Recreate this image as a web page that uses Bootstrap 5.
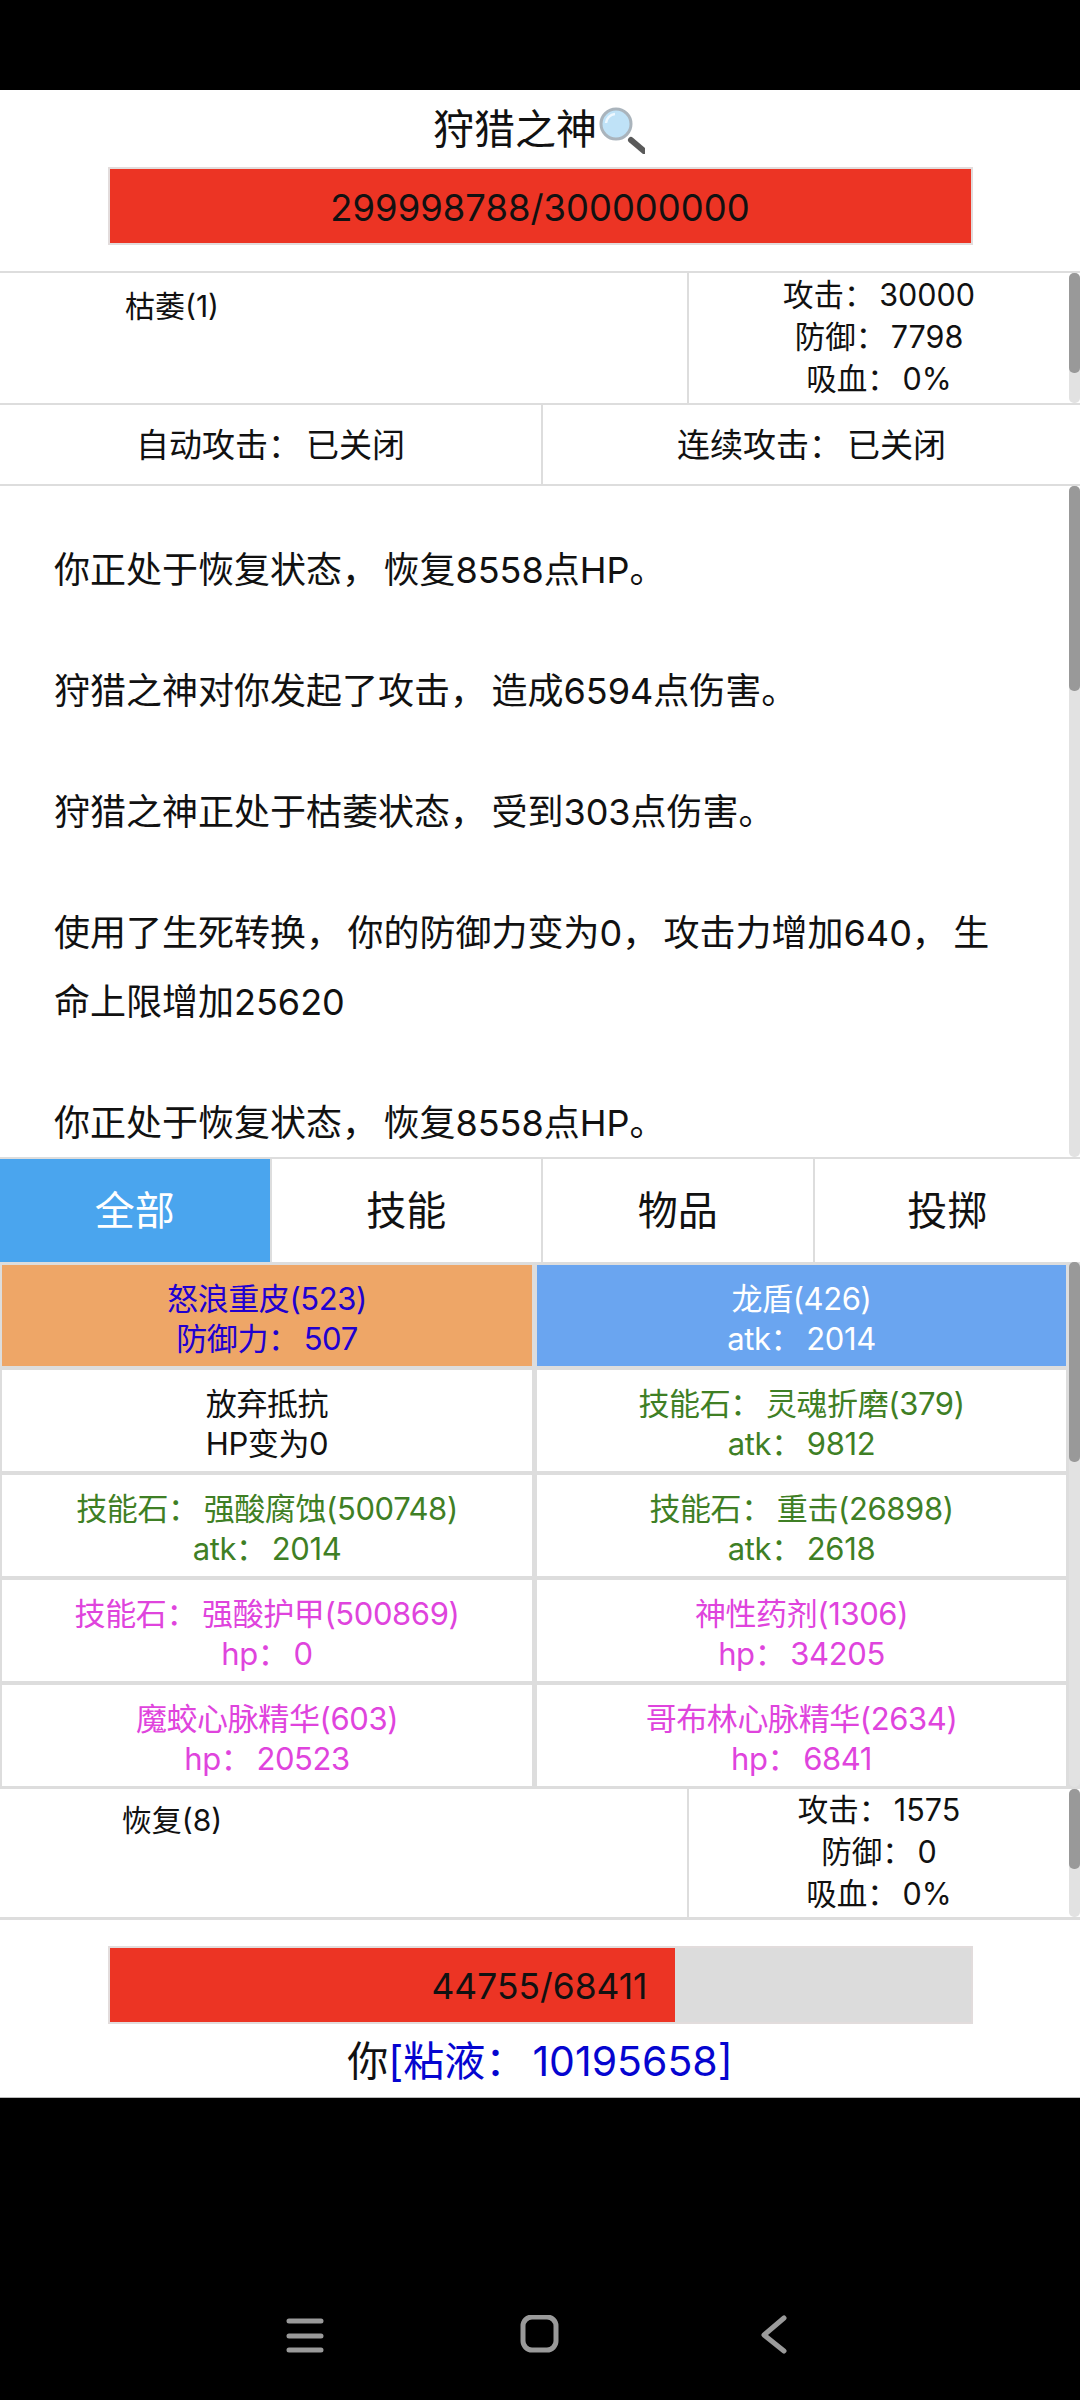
<!DOCTYPE html>
<html lang="zh-CN">
<head>
<meta charset="utf-8">
<title>狩猎之神</title>
<link href="https://cdn.jsdelivr.net/npm/bootstrap@5.3.0/dist/css/bootstrap.min.css" rel="stylesheet">
<style>
html,body{background:#000;width:1080px;height:2400px;overflow:hidden}
body{font-family:Inter,"Noto Sans CJK SC",sans-serif;color:#111;font-size:32px;line-height:42px}
.wp{letter-spacing:.15em}
.top-gap{height:90px}
.game{background:#fff;height:2008px;border-bottom:1px solid #bbb}
.head-zone{height:181px;padding-top:9px}
.boss-title{font-size:41px;line-height:60px;height:60px;padding-right:2px}
.boss-title svg{width:50px;height:50px;vertical-align:-10px;margin-left:-2px}
.hp-track{width:865px;height:78px;margin:8px auto 0;background:#dcdcdc;border:2px solid #e2dcdc;font-size:36.4px;line-height:78px}
.hp-fill{height:100%;background:#ec3424}
.boss-hp{text-align:center}
.me-hp{text-align:right;padding-right:27px;width:565px;font-size:35.4px}
.sect{border-top:2px solid #ddd;position:relative}
.status-zone{height:132px}
.status-zone.me{height:130px}
.buff-area{width:689px;border-right:2px solid #ddd}
.buff-box{width:344px;padding-top:12px;font-size:30px}
.me .buff-box{padding-top:10px}
.stat-area{width:380px;padding:1px 0 0 0;font-size:30.5px}
.me .stat-area{padding-top:0}
.toggle-zone{height:81px;font-size:33px;line-height:81px}
.toggle-zone .col-6:first-child{width:543px;border-right:2px solid #ddd}
.toggle-zone .col-6:last-child{width:537px}
.log-zone{height:673px;overflow:hidden;padding:50px 66px 0 54px;font-size:36px;line-height:69px}
.log-zone p{margin:0 0 52px}
.tab-zone{height:105px;font-size:40px;line-height:104px}
.tab-zone .col-3{width:271.5px}
.tab-zone .col-3:not(:last-child){border-right:2px solid #ddd}
.tab-zone .col-3:last-child{width:265.5px}
.tab-zone .tab-on{background:#4aa5ee;color:#fff;border-right:0}
.item-zone{height:525px;background:#ddd;position:relative;padding:3px 14px 0 2px;display:grid;grid-template-columns:530px 529px;grid-auto-rows:101px;row-gap:4px;column-gap:5px;font-size:31px;line-height:40px;letter-spacing:-.4px}
.item-cell{background:#fff;padding-top:14px;text-align:center}
.c-worn{background:#eea667;color:#2000d0}
.c-sel{background:#6aa5f0;color:#fff}
.c-green{color:#3f7f25}
.c-pink{color:#df44dd}
.me-zone{height:180px;padding-top:26px;border-top:3px solid #ddd}
.me-name{font-size:41px;line-height:56px;margin-top:9px}
.me-name span{color:#0505d0}
.sb-track{position:absolute;top:0;right:0;bottom:0;width:11px;background:#e2e2e2;border-radius:5px}
.sb-thumb{position:absolute;top:0;left:0;right:0;background:#999;border-radius:5px}
</style>
</head>
<body>
<div class="top-gap"></div>
<main class="game">
  <section class="head-zone text-center">
    <div class="boss-title">狩猎之神<svg viewBox="0 0 50 50"><path d="M36 36 L49 47" stroke="#5a5a5a" stroke-width="6" stroke-linecap="round"/><circle cx="21" cy="20" r="15" fill="#bfe2f7" stroke="#aab4bc" stroke-width="3"/><path d="M11 19a10 10 0 0 1 9-9" fill="none" stroke="#eef8ff" stroke-width="2.5"/></svg></div>
    <div class="hp-track"><div class="hp-fill boss-hp">299998788/300000000</div></div>
  </section>
  <section class="sect status-zone d-flex">
    <div class="buff-area"><div class="buff-box text-center">枯萎(1)</div></div>
    <div class="stat-area text-center"><div>攻击<span class="wp">：</span>30000</div><div>防御<span class="wp">：</span>7798</div><div>吸血<span class="wp">：</span>0%</div></div>
    <div class="sb-track"><div class="sb-thumb" style="height:100px"></div></div>
  </section>
  <section class="sect toggle-zone row g-0 text-center">
    <div class="col-6">自动攻击<span class="wp">：</span>已关闭</div>
    <div class="col-6">连续攻击<span class="wp">：</span>已关闭</div>
  </section>
  <section class="sect log-zone">
    <p>你正处于恢复状态<span class="wp">，</span>恢复8558点HP<span class="wp">。</span></p>
    <p>狩猎之神对你发起了攻击<span class="wp">，</span>造成6594点伤害<span class="wp">。</span></p>
    <p>狩猎之神正处于枯萎状态<span class="wp">，</span>受到303点伤害<span class="wp">。</span></p>
    <p>使用了生死转换<span class="wp">，</span>你的防御力变为0<span class="wp">，</span>攻击力增加640<span class="wp">，</span>生<br>命上限增加25620</p>
    <p>你正处于恢复状态<span class="wp">，</span>恢复8558点HP<span class="wp">。</span></p>
    <div class="sb-track"><div class="sb-thumb" style="height:205px"></div></div>
  </section>
  <section class="sect tab-zone row g-0 text-center">
    <div class="col-3 tab-on">全部</div>
    <div class="col-3">技能</div>
    <div class="col-3">物品</div>
    <div class="col-3">投掷</div>
  </section>
  <section class="item-zone">
    <div class="item-cell c-worn">怒浪重皮(523)<br>防御力<span class="wp">：</span>507</div>
    <div class="item-cell c-sel">龙盾(426)<br>atk<span class="wp">：</span>2014</div>
    <div class="item-cell">放弃抵抗<br>HP变为0</div>
    <div class="item-cell c-green">技能石<span class="wp">：</span>灵魂折磨(379)<br>atk<span class="wp">：</span>9812</div>
    <div class="item-cell c-green">技能石<span class="wp">：</span>强酸腐蚀(500748)<br>atk<span class="wp">：</span>2014</div>
    <div class="item-cell c-green">技能石<span class="wp">：</span>重击(26898)<br>atk<span class="wp">：</span>2618</div>
    <div class="item-cell c-pink">技能石<span class="wp">：</span>强酸护甲(500869)<br>hp<span class="wp">：</span>0</div>
    <div class="item-cell c-pink">神性药剂(1306)<br>hp<span class="wp">：</span>34205</div>
    <div class="item-cell c-pink">魔蛟心脉精华(603)<br>hp<span class="wp">：</span>20523</div>
    <div class="item-cell c-pink">哥布林心脉精华(2634)<br>hp<span class="wp">：</span>6841</div>
    <div class="sb-track"><div class="sb-thumb" style="height:200px"></div></div>
  </section>
  <section class="sect status-zone me d-flex">
    <div class="buff-area"><div class="buff-box text-center">恢复(8)</div></div>
    <div class="stat-area text-center"><div>攻击<span class="wp">：</span>1575</div><div>防御<span class="wp">：</span>0</div><div>吸血<span class="wp">：</span>0%</div></div>
    <div class="sb-track"><div class="sb-thumb" style="height:80px"></div></div>
  </section>
  <section class="me-zone text-center">
    <div class="hp-track m-auto"><div class="hp-fill me-hp">44755/68411</div></div>
    <div class="me-name">你<span>[粘液<span class="wp">：</span>10195658]</span></div>
  </section>
</main>
<svg class="d-block mx-auto" style="margin-top:217px" width="1080" height="50" viewBox="0 0 1080 50" fill="none" stroke="#9a9a9a" stroke-width="5" stroke-linecap="round" stroke-linejoin="round">
  <path d="M289 6H321M289 21H321M289 35H321"/>
  <rect x="523" y="2" width="33" height="33" rx="9"/>
  <path d="M784 3L764 20L784 36"/>
</svg>
</body>
</html>
